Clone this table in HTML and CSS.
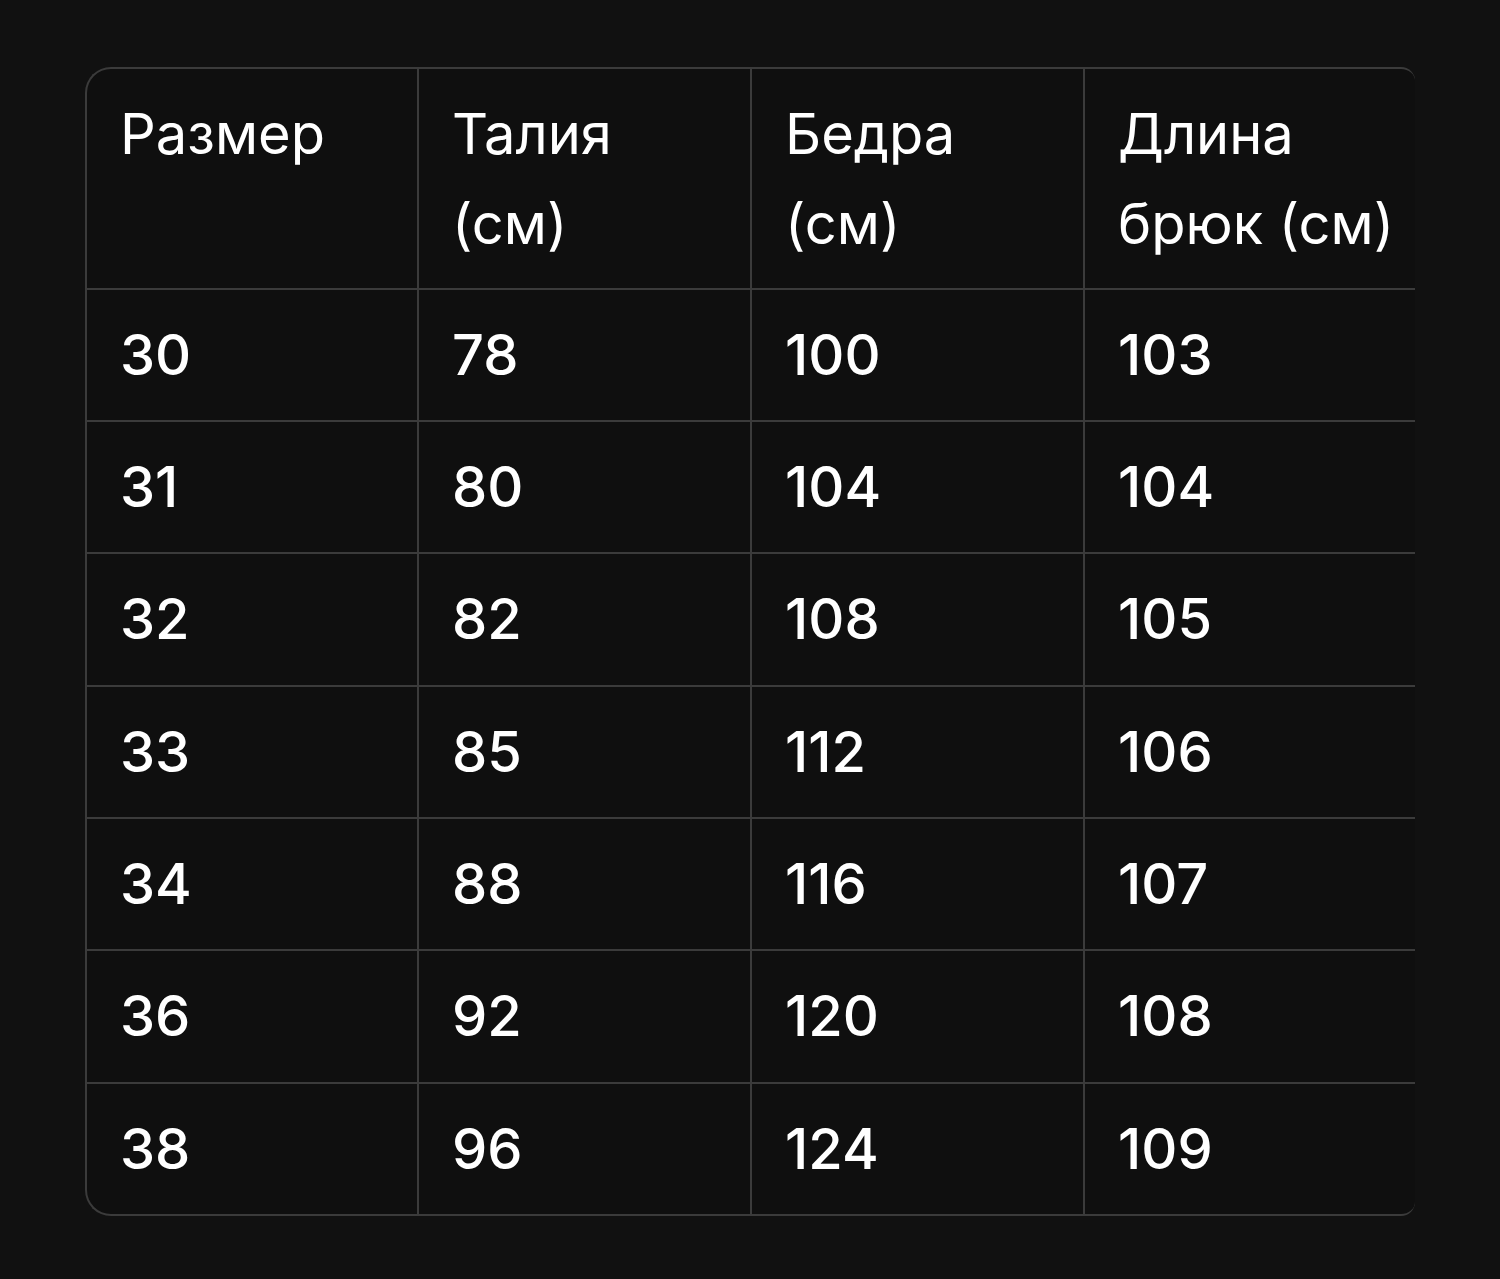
FILE: index.html
```html
<!DOCTYPE html>
<html lang="ru">
<head>
<meta charset="utf-8">
<title>Размеры</title>
<link rel="stylesheet" href="styles.css">
</head>
<body>
<div class="table-wrap">
  <table class="size-table">
    <colgroup>
      <col class="c1"><col class="c2"><col class="c3"><col class="c4">
    </colgroup>
    <thead>
      <tr><th>Размер</th><th>Талия (см)</th><th>Бедра (см)</th><th>Длина брюк (см)</th></tr>
    </thead>
    <tbody>
      <tr><td>30</td><td>78</td><td>100</td><td>103</td></tr>
      <tr><td>31</td><td>80</td><td>104</td><td>104</td></tr>
      <tr><td>32</td><td>82</td><td>108</td><td>105</td></tr>
      <tr><td>33</td><td>85</td><td>112</td><td>106</td></tr>
      <tr><td>34</td><td>88</td><td>116</td><td>107</td></tr>
      <tr><td>36</td><td>92</td><td>120</td><td>108</td></tr>
      <tr><td>38</td><td>96</td><td>124</td><td>109</td></tr>
    </tbody>
  </table>
</div>
</body>
</html>
```

FILE: styles.css
```css
html, body {
  margin: 0;
  background: #111111;
}
body {
  padding: 67px 0 0 85px;
  font-family: Inter, "Noto Sans", sans-serif;
  color: #ffffff;
}
.table-wrap {
  width: 1328px;
  border: 2px solid #3b3b3b;
  border-right: 0;
  border-radius: 26px 14px 14px 26px;
  overflow: hidden;
  background: #0f0f0f;
}
.size-table {
  width: 1328px;
  table-layout: fixed;
  border-collapse: separate;
  border-spacing: 0;
}
.c1 { width: 332px; }
.c2 { width: 333px; }
.c3 { width: 333px; }
.c4 { width: 330px; }
.size-table th,
.size-table td {
  text-align: left;
  vertical-align: top;
  font-size: 56px;
  line-height: 90px;
  padding: 20px 8px 20px 33px;
  border-right: 2px solid #3b3b3b;
  border-bottom: 2px solid #3b3b3b;
}
.size-table th {
  font-weight: 400;
  padding-top: 19.5px;
  padding-bottom: 19px;
}
.size-table td {
  font-weight: 500;
  line-height: 90px;
  padding-bottom: 20.4px;
}
.size-table th:last-child,
.size-table td:last-child {
  border-right: 0;
  padding-right: 0;
}
.size-table tbody tr:last-child td {
  border-bottom: 0;
}
```
